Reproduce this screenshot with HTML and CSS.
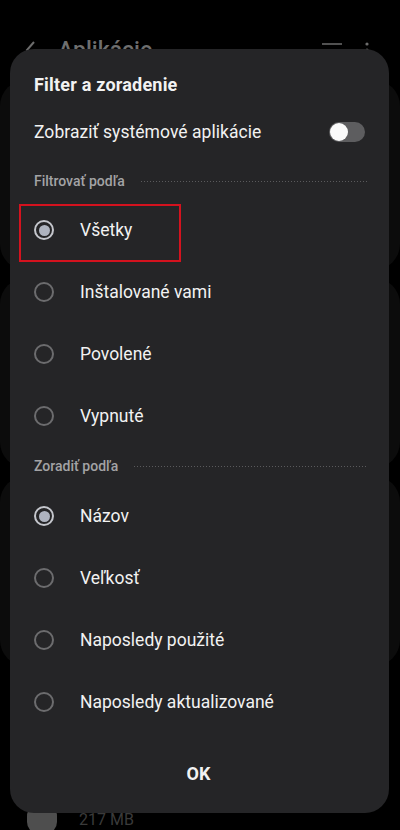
FILE: index.html
```html
<!DOCTYPE html>
<html lang="sk">
<head>
<meta charset="utf-8">
<link rel="stylesheet" href="styles.css">
</head>
<body>
<div class="screen">
  <div class="under">
    <div class="appbar">
      <svg class="back" width="14" height="20" viewBox="0 0 14 20"><path d="M10 2 L3 10 L10 18" fill="none" stroke="#6c6c6c" stroke-width="2"/></svg>
      <span class="apptitle">Aplikácie</span>
      <span class="spacer"></span>
      <svg class="ficon" width="24" height="20" viewBox="0 0 24 20"><path d="M2 4 H22 M2 14 H8 M16 14 H22" stroke="#6c6c6c" stroke-width="1.6"/><circle cx="12" cy="14" r="3" fill="none" stroke="#6c6c6c" stroke-width="1.6"/></svg>
      <svg class="kebab" width="6" height="20" viewBox="0 0 6 20"><circle cx="3" cy="4" r="1.6" fill="#6c6c6c"/><circle cx="3" cy="10" r="1.6" fill="#6c6c6c"/><circle cx="3" cy="16" r="1.6" fill="#6c6c6c"/></svg>
    </div>
    <div class="card c1"></div>
    <div class="card c2"></div>
    <div class="card c3"></div>
    <div class="lastrow">
      <span class="appicon"></span>
      <span class="size">217 MB</span>
    </div>
  </div>

  <div class="dialog">
    <div class="title">Filter a zoradenie</div>
    <div class="toggle-row">
      <span class="toggle-label">Zobraziť systémové aplikácie</span>
      <span class="switch"><span class="knob"></span></span>
    </div>

    <div class="section"><span class="section-label">Filtrovať podľa</span><span class="dots"></span></div>
    <div class="option">
      <span class="radio on"></span><span class="opt-label">Všetky</span>
      <span class="highlight"></span>
    </div>
    <div class="option"><span class="radio"></span><span class="opt-label">Inštalované vami</span></div>
    <div class="option"><span class="radio"></span><span class="opt-label">Povolené</span></div>
    <div class="option"><span class="radio"></span><span class="opt-label">Vypnuté</span></div>

    <div class="section s2"><span class="section-label">Zoradiť podľa</span><span class="dots"></span></div>
    <div class="option"><span class="radio on"></span><span class="opt-label">Názov</span></div>
    <div class="option"><span class="radio"></span><span class="opt-label">Veľkosť</span></div>
    <div class="option"><span class="radio"></span><span class="opt-label">Naposledy použité</span></div>
    <div class="option"><span class="radio"></span><span class="opt-label">Naposledy aktualizované</span></div>

    <div class="actions"><span class="ok">OK</span></div>
  </div>
</div>
</body>
</html>
```
FILE: styles.css
```css
* { box-sizing: border-box; }
html, body { margin: 0; padding: 0; background: #000; }
body { font-family: Roboto, "Noto Sans", "DejaVu Sans", sans-serif; }

.screen {
  position: relative;
  width: 400px;
  height: 830px;
  overflow: hidden;
  background: #000;
}

.under { display: flex; flex-direction: column; }
.appbar {
  display: flex;
  align-items: center;
  height: 40px;
  margin-top: 30px;
  padding: 0 30px 0 24px;
}
.back { margin-right: 20px; }
.apptitle { font-size: 23px; color: #6e6e6e; font-weight: 500; }
.spacer { flex: 1; }
.ficon { margin-right: 20px; }

.card {
  margin: 0 0 8px;
  height: 190px;
  border-radius: 26px;
  background: #0c0c0c;
}
.c1 { margin-top: 10px; }
.lastrow {
  display: flex;
  align-items: center;
  gap: 22px;
  padding-left: 27px;
  margin-top: 130px;
}
.appicon { width: 30px; height: 30px; border-radius: 12px; background: #4e4e4e; }
.size { color: #3a3a3a; font-size: 16px; }

.dialog {
  position: absolute;
  left: 10px;
  top: 49px;
  width: 379px;
  height: 764px;
  background: #252527;
  border-radius: 24px;
  padding: 24px 0 0;
  color: #f2f2f2;
  display: flex;
  flex-direction: column;
}

.title {
  padding: 0 24px;
  font-size: 18px;
  font-weight: 700;
  line-height: 24px;
  letter-spacing: 0.2px;
}

.toggle-row {
  margin-top: 12px;
  height: 46px;
  display: flex;
  align-items: center;
  padding: 0 24px 0 24px;
}
.toggle-label { font-size: 17.5px; flex: 1; letter-spacing: 0.05px; }
.switch {
  width: 36px;
  height: 20px;
  border-radius: 10px;
  background: #5d5d5f;
  display: flex;
  align-items: center;
  padding-left: 1px;
}
.knob { width: 18px; height: 18px; border-radius: 50%; background: #fafafa; }

.section {
  margin-top: 8px;
  height: 36px;
  display: flex;
  align-items: center;
  padding: 0 22px 0 24px;
  gap: 16px;
}
.section.s2 { margin-top: 0; height: 38px; }
.section-label { font-size: 14px; color: #a3a3a5; font-weight: 500; }
.dots {
  flex: 1;
  height: 1px;
  background-image: repeating-linear-gradient(to right, #5a5a5c 0 1px, transparent 1px 3px);
}

.option {
  position: relative;
  height: 62px;
  display: flex;
  align-items: center;
  padding-left: 24px;
}
.radio {
  width: 20px;
  height: 20px;
  border-radius: 50%;
  border: 2px solid #6c6c6e;
  margin-right: 26px;
  display: flex;
  align-items: center;
  justify-content: center;
  flex: none;
}
.radio.on { border-color: #c4c6cc; }
.radio.on::after {
  content: "";
  width: 11px;
  height: 11px;
  border-radius: 50%;
  background: #aeb3bf;
}
.opt-label { font-size: 17.5px; }

.highlight {
  position: absolute;
  left: 9px;
  top: 5px;
  width: 162px;
  height: 58px;
  border: 2px solid #d4121e;
}

.actions {
  flex: 1;
  display: flex;
  align-items: center;
  justify-content: center;
}
.ok { font-size: 18px; font-weight: 700; margin-left: -2px; }
```
